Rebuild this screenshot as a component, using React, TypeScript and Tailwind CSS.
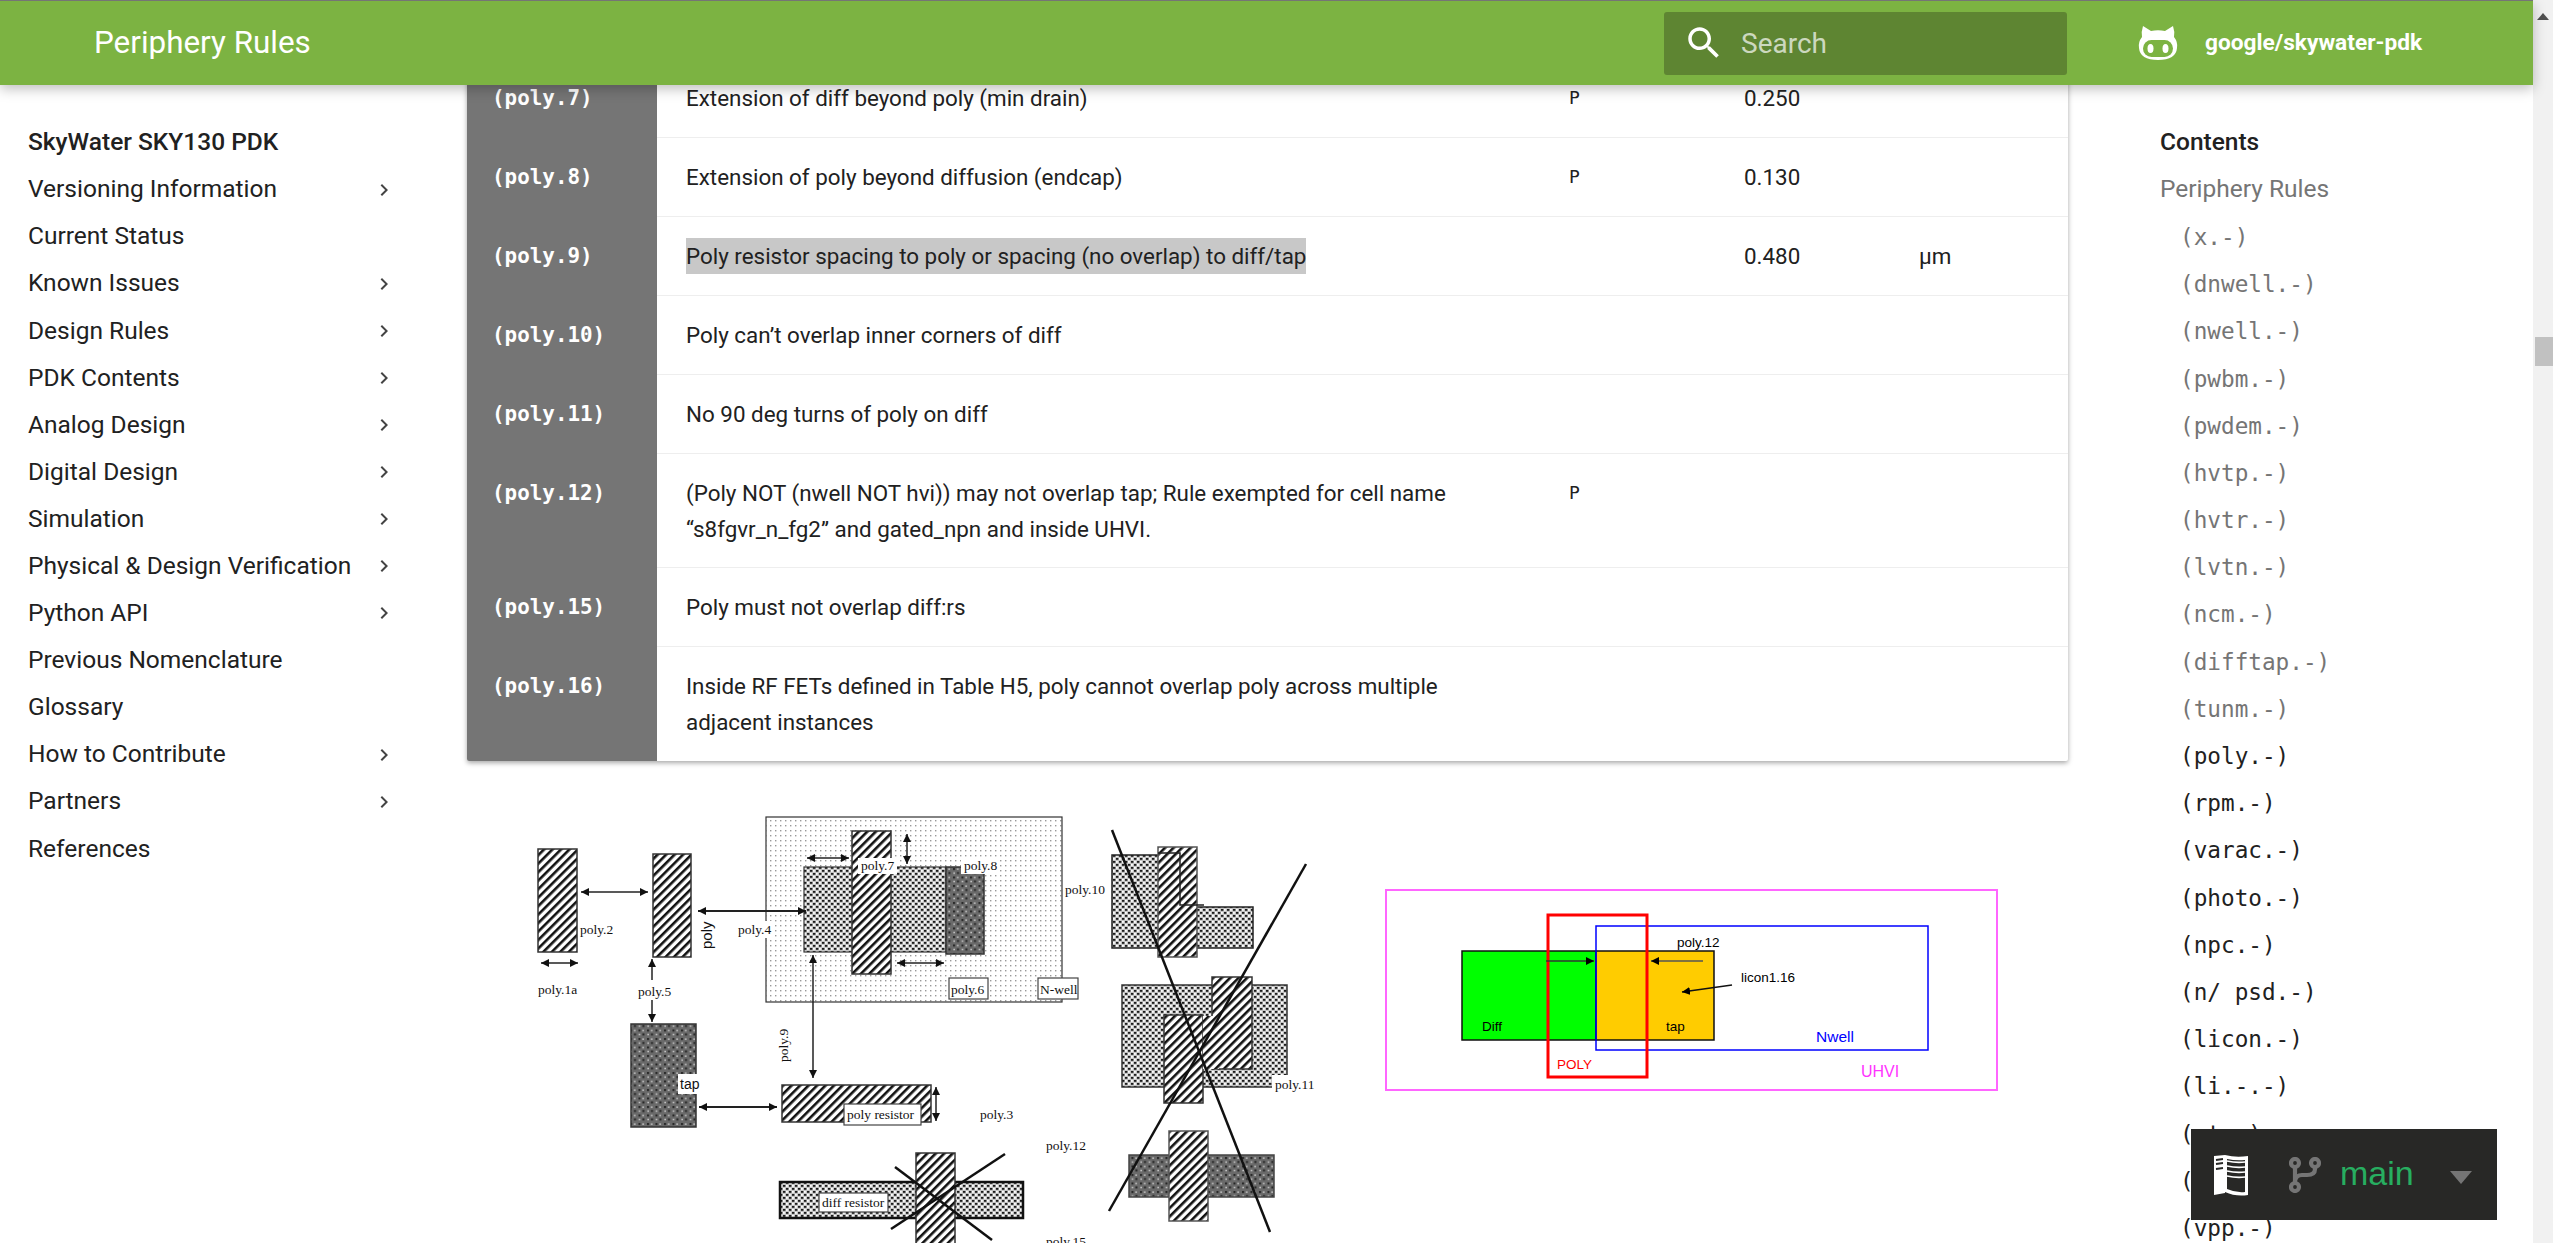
const NAV: [string, boolean][] = [
  ["Versioning Information", true],
  ["Current Status", false],
  ["Known Issues", true],
  ["Design Rules", true],
  ["PDK Contents", true],
  ["Analog Design", true],
  ["Digital Design", true],
  ["Simulation", true],
  ["Physical & Design Verification", true],
  ["Python API", true],
  ["Previous Nomenclature", false],
  ["Glossary", false],
  ["How to Contribute", true],
  ["Partners", true],
  ["References", false],
];

const TOC_SEEN = ["(x.-)", "(dnwell.-)", "(nwell.-)", "(pwbm.-)", "(pwdem.-)", "(hvtp.-)", "(hvtr.-)", "(lvtn.-)", "(ncm.-)", "(difftap.-)", "(tunm.-)"];
const TOC_NEXT = ["(poly.-)", "(rpm.-)", "(varac.-)", "(photo.-)", "(npc.-)", "(n/ psd.-)", "(licon.-)", "(li.-.-)", "(ct.-)", "(capm.-)", "(vpp.-)"];

type Rule = { code: string; text: string; flag?: string; value?: string; unit?: string; mark?: boolean; tight?: boolean };

const RULES: Rule[] = [
  { code: "(poly.7)", text: "Extension of diff beyond poly (min drain)", flag: "P", value: "0.250" },
  { code: "(poly.8)", text: "Extension of poly beyond diffusion (endcap)", flag: "P", value: "0.130" },
  { code: "(poly.9)", text: "Poly resistor spacing to poly or spacing (no overlap) to diff/tap", value: "0.480", unit: "µm", mark: true },
  { code: "(poly.10)", text: "Poly can’t overlap inner corners of diff" },
  { code: "(poly.11)", text: "No 90 deg turns of poly on diff" },
  { code: "(poly.12)", text: "(Poly NOT (nwell NOT hvi)) may not overlap tap; Rule exempted for cell name “s8fgvr_n_fg2” and gated_npn and inside UHVI.", flag: "P", tight: true },
  { code: "(poly.15)", text: "Poly must not overlap diff:rs" },
  { code: "(poly.16)", text: "Inside RF FETs defined in Table H5, poly cannot overlap poly across multiple adjacent instances" },
];

const HATCH = "url(#hatch)";
const DOTS = "url(#dots)";
const DIFF = "url(#diff)";
const TAP = "url(#tap)";

function Arrow({ d, both = true, w = 1.5 }: { d: [number, number, number, number]; both?: boolean; w?: number }) {
  return (
    <line x1={d[0]} y1={d[1]} x2={d[2]} y2={d[3]} stroke="#222" strokeWidth={w}
      markerEnd="url(#head)" markerStart={both ? "url(#head)" : undefined} />
  );
}

function Box({ x, y, w, h, fill, stroke = "#333", sw = 1.5 }: { x: number; y: number; w: number; h: number; fill: string; stroke?: string; sw?: number }) {
  return <rect x={x} y={y} width={w} height={h} fill={fill} stroke={stroke} strokeWidth={sw} />;
}

function Tag({ x, y, w, h, tx, ty, label, border }: { x: number; y: number; w: number; h: number; tx: number; ty: number; label: string; border?: boolean }) {
  return (
    <g>
      <rect x={x} y={y} width={w} height={h} fill="#fff" stroke={border ? "#444" : "none"} strokeWidth={1.2} />
      <text x={tx} y={ty} fill="#111">{label}</text>
    </g>
  );
}

function RulesFigure() {
  return (
    <svg viewBox="520 800 830 443" width={830} height={443} className="shrink-0 font-['Liberation_Serif',serif] text-[13.5px]">
      <defs>
        <pattern id="hatch" width="6" height="6" patternUnits="userSpaceOnUse" patternTransform="rotate(45)">
          <rect width="6" height="6" fill="#fff" />
          <rect width="2.6" height="6" fill="#111" />
        </pattern>
        <pattern id="dots" width="5" height="5" patternUnits="userSpaceOnUse">
          <rect width="5" height="5" fill="#fff" />
          <rect width="1.4" height="1.4" fill="#999" />
        </pattern>
        <pattern id="diff" width="6" height="6" patternUnits="userSpaceOnUse">
          <rect width="6" height="6" fill="#c4c4c4" />
          <rect width="2.4" height="1.8" fill="#1a1a1a" />
          <rect x="3" y="3" width="2.4" height="1.8" fill="#1a1a1a" />
          <rect x="3" width="1.8" height="1.8" fill="#fff" />
          <rect y="3" width="1.8" height="1.8" fill="#fff" />
        </pattern>
        <pattern id="tap" width="8.5" height="8.5" patternUnits="userSpaceOnUse">
          <rect width="8.5" height="8.5" fill="#6a6a6a" />
          <rect x="1" y="1" width="2" height="2" fill="#222" />
          <rect x="5" y="5" width="2" height="2" fill="#222" />
          <rect x="5" y="1.4" width="1.4" height="1.4" fill="#ddd" />
          <rect x="1.4" y="5.4" width="1.4" height="1.4" fill="#ddd" />
        </pattern>
        <marker id="head" markerUnits="userSpaceOnUse" markerWidth="10" markerHeight="10" refX="8" refY="4" orient="auto-start-reverse">
          <path d="M0 0L8 4L0 8Z" fill="#111" />
        </marker>
      </defs>

      {/* spacing rules */}
      <Box x={538} y={849} w={39} h={103} fill={HATCH} />
      <Box x={653} y={854} w={38} h={103} fill={HATCH} />
      <Arrow d={[581, 892, 648, 892]} />
      <text x={580} y={934} fill="#111">poly.2</text>
      <Arrow d={[541, 963, 578, 963]} />
      <text x={538} y={994} fill="#111">poly.1a</text>
      <line x1={652} y1={959} x2={652} y2={980} stroke="#222" strokeWidth={1.5} markerStart="url(#head)" />
      <line x1={652} y1={1000} x2={652} y2={1022} stroke="#222" strokeWidth={1.5} markerEnd="url(#head)" />
      <text x={638} y={996} fill="#111">poly.5</text>
      <text transform="translate(712 949) rotate(-90)" fill="#111" className="font-['Liberation_Sans',sans-serif] text-[15px]">poly</text>

      <Box x={766} y={817} w={296} h={185} fill={DOTS} sw={1.2} />
      <Box x={804} y={867} w={142} h={85} fill={DIFF} sw={1.2} />
      <Box x={946} y={867} w={38} h={87} fill={TAP} />
      <Box x={852} y={831} w={39} h={143} fill={HATCH} />
      <Arrow d={[698, 911, 806, 911]} w={2} />
      <Tag x={736} y={921} w={37} h={17} tx={738} ty={934} label="poly.4" />
      <Tag x={858} y={858} w={39} h={16} tx={861} ty={870} label="poly.7" />
      <Tag x={961} y={858} w={36} h={16} tx={964} ty={870} label="poly.8" />
      <Arrow d={[807, 858, 849, 858]} />
      <Arrow d={[907, 834, 907, 864]} />
      <Arrow d={[897, 963, 944, 963]} />
      <Tag x={949} y={978} w={39} h={21} tx={951} ty={994} label="poly.6" border />
      <Tag x={1038} y={978} w={40} h={21} tx={1040} ty={994} label="N-well" border />
      <text x={1065} y={894} fill="#111">poly.10</text>

      <Arrow d={[813, 955, 813, 1078]} />
      <text transform="translate(788 1062) rotate(-90)" fill="#111">poly.9</text>

      {/* tap and resistor */}
      <Box x={631} y={1024} w={65} h={103} fill={TAP} />
      <rect x={678} y={1074} width={20} height={20} fill="#fff" />
      <text x={680} y={1089} fill="#111" className="font-['Liberation_Sans',sans-serif] text-[14px]">tap</text>
      <Arrow d={[699, 1107, 777, 1107]} w={2} />
      <Box x={782} y={1085} w={149} h={37} fill={HATCH} />
      <Tag x={844} y={1104} w={77} h={21} tx={847} ty={1119} label="poly resistor" border />
      <Arrow d={[936, 1087, 936, 1121]} />
      <text x={980} y={1119} fill="#111">poly.3</text>
      <text x={1046} y={1150} fill="#111">poly.12</text>

      <Box x={780} y={1182} w={243} h={36} fill={DIFF} stroke="#111" sw={2.5} />
      <Box x={916} y={1153} w={39} h={100} fill={HATCH} />
      <Tag x={819} y={1193} w={69} h={19} tx={822} ty={1207} label="diff resistor" border />
      <line x1={895} y1={1167} x2={992} y2={1240} stroke="#111" strokeWidth={2.5} />
      <line x1={1005} y1={1154} x2={891} y2={1229} stroke="#111" strokeWidth={2.5} />
      <text x={1046} y={1246} fill="#111">poly.15</text>

      {/* not allowed shapes */}
      <polygon points="1112,855 1180,855 1180,907 1253,907 1253,948 1112,948" fill={DIFF} stroke="#222" strokeWidth={1.5} />
      <polygon points="1158,847 1197,847 1197,904 1197,957 1158,957" fill={HATCH} stroke="#555" strokeWidth={1.5} />
      <polyline points="1158,853 1180,853 1180,905 1204,905" fill="none" stroke="#222" strokeWidth={1.5} />

      <Box x={1122} y={985} w={165} h={102} fill={DIFF} />
      <Box x={1212} y={977} w={40} h={92} fill={HATCH} />
      <Box x={1164} y={1015} w={39} h={88} fill={HATCH} />
      <rect x={1203} y={1016} width={16} height={53} fill={HATCH} />
      <Tag x={1272} y={1075} w={44} h={18} tx={1275} ty={1089} label="poly.11" />

      <Box x={1129} y={1155} w={145} h={42} fill={TAP} stroke="#444" />
      <Box x={1169} y={1131} w={39} h={90} fill={HATCH} stroke="#555" />

      <line x1={1112} y1={830} x2={1270} y2={1232} stroke="#111" strokeWidth={2.5} />
      <line x1={1306} y1={864} x2={1109} y2={1211} stroke="#111" strokeWidth={2.5} />
    </svg>
  );
}

function LiconFigure() {
  return (
    <svg viewBox="1380 880 624 220" width={624} height={220} className="mt-[80px] shrink-0 font-['Liberation_Sans',sans-serif] text-[13.5px]">
      <defs>
        <marker id="tip" markerUnits="userSpaceOnUse" markerWidth="10" markerHeight="10" refX="8" refY="4" orient="auto">
          <path d="M0 0L8 4L0 8Z" fill="#000" />
        </marker>
      </defs>
      <rect x={1386} y={890} width={611} height={200} fill="#fff" stroke="#ff66ff" strokeWidth={2} />
      <rect x={1462} y={951} width={134} height={89} fill="#00ff00" stroke="#111" strokeWidth={1.5} />
      <rect x={1596} y={951} width={118} height={89} fill="#ffcc00" stroke="#111" strokeWidth={1.5} />
      <rect x={1596} y={926} width={332} height={124} fill="none" stroke="#0000ff" strokeWidth={1.5} />
      <rect x={1548} y={915} width={99} height={162} fill="none" stroke="#ff0000" strokeWidth={3} />
      <line x1={1546} y1={961} x2={1594} y2={961} stroke="#333" strokeWidth={1.5} markerEnd="url(#tip)" />
      <line x1={1703} y1={961} x2={1651} y2={961} stroke="#555" strokeWidth={1.5} markerEnd="url(#tip)" />
      <line x1={1732} y1={985} x2={1682} y2={992} stroke="#111" strokeWidth={1.5} markerEnd="url(#tip)" />
      <text x={1677} y={947}>poly.12</text>
      <text x={1741} y={982}>licon1.16</text>
      <text x={1482} y={1031}>Diff</text>
      <text x={1666} y={1031}>tap</text>
      <text x={1816} y={1042} fill="#0000ff" className="text-[15.5px]">Nwell</text>
      <text x={1557} y={1069} fill="#ff0000">POLY</text>
      <text x={1861} y={1077} fill="#ff33ff" className="text-[16px]">UHVI</text>
    </svg>
  );
}

function BookIcon() {
  return (
    <svg viewBox="0 0 34 42" width={34} height={42} className="shrink-0">
      <path d="M0 2L11 1V39L0 41Z" fill="#fff" />
      <path d="M11 1Q22 4 34 2V41Q22 43 11 38Z" fill="#fff" />
      <path d="M13 5Q22 7 31 6V38Q22 39 13 35Z" fill="#282826" />
      <path d="M13 7Q22 9 31 8M13 12Q22 14 31 13M13 17Q22 19 31 18M13 22Q22 24 31 23" fill="none" stroke="#fff" strokeWidth={1.6} />
      <path d="M2 6L9 5M2 10L9 9M2 15L9 14" fill="none" stroke="#282826" strokeWidth={1.8} />
    </svg>
  );
}

function BranchIcon() {
  return (
    <svg viewBox="0 0 32 36" width={32} height={36} className="shrink-0">
      <g fill="none" stroke="#757575" strokeWidth={4.2}>
        <circle cx="6" cy="6" r="4" />
        <circle cx="26" cy="6" r="4" />
        <circle cx="6" cy="30" r="4" />
        <path d="M6 10V26M26 10V12Q26 18 18 18H13Q7 18 6 24" />
      </g>
    </svg>
  );
}

function GithubIcon() {
  return (
    <svg viewBox="0 0 48 42" width={48} height={42} className="shrink-0">
      <path d="M9 4L17 9Q24 7.5 31 9L39 4Q41 10 40 15Q44 20 43 26Q42 38 24 38Q6 38 5 26Q4 20 8 15Q7 10 9 4Z" fill="#fff" />
      <rect x="9" y="18" width="30" height="17" rx="8.5" fill="#7cb342" />
      <ellipse cx="16.5" cy="26.5" rx="3" ry="4.5" fill="#fff" />
      <ellipse cx="31.5" cy="26.5" rx="3" ry="4.5" fill="#fff" />
    </svg>
  );
}

export default function App() {
  return (
    <div className="relative flex h-screen overflow-hidden bg-white font-['Roboto',sans-serif] text-[#212121]">
      <div className="flex min-w-0 flex-1 flex-col">
        <header className="relative z-10 flex h-[85px] shrink-0 items-center border-t border-[#757575] bg-[#7cb342] shadow-[0_4px_12px_rgba(0,0,0,0.25)]">
          <h1 className="ml-[94px] text-[31.4px] font-normal text-white">Periphery Rules</h1>
          <div className="ml-auto flex h-[63px] w-[403px] items-center rounded-[3px] bg-[#5e8532] pl-[19px]">
            <svg viewBox="0 0 24 24" width={42} height={42} className="shrink-0 fill-white">
              <path d="M15.5 14h-.79l-.28-.27C15.41 12.59 16 11.11 16 9.5 16 5.91 13.09 3 9.5 3S3 5.91 3 9.5 5.91 16 9.5 16c1.61 0 3.09-.59 4.23-1.57l.27.28v.79l5 4.99L20.49 19l-4.99-5zm-6 0C7.01 14 5 11.99 5 9.5S7.01 5 9.5 5 14 7.01 14 9.5 11.99 14 9.5 14z" />
            </svg>
            <span className="ml-[16px] mt-[2px] text-[28px] text-white/70">Search</span>
          </div>
          <div className="ml-[67px] flex w-[399px] items-center">
            <GithubIcon />
            <span className="ml-[23px] text-[22.7px] font-bold text-white">google/skywater-pdk</span>
          </div>
        </header>

        <div className="flex min-h-0 flex-1 overflow-hidden">
          <nav className="w-[467px] shrink-0 pl-[28px] pt-[34px] text-[24.5px]">
            <div className="flex h-[47.1px] items-center font-medium">SkyWater SKY130 PDK</div>
            {NAV.map(([label, more]) => (
              <div key={label} className="flex h-[47.1px] w-[368px] items-center justify-between">
                <span>{label}</span>
                {more && (
                  <svg viewBox="0 0 24 24" width={24} height={24} className="shrink-0 fill-[#444]">
                    <path d="M8.59 16.59L13.17 12 8.59 7.41 10 6l6 6-6 6z" />
                  </svg>
                )}
              </div>
            ))}
          </nav>

          <main className="w-[1601px] shrink-0">
            <div className="-mt-[26px] overflow-hidden rounded-[2px] bg-white shadow-[0_2px_5px_rgba(0,0,0,0.35)]">
              <table className="w-full table-fixed border-separate border-spacing-0 text-[22.4px] leading-[36px]">
                <colgroup>
                  <col className="w-[190px]" />
                  <col className="w-[882px]" />
                  <col className="w-[175px]" />
                  <col className="w-[175px]" />
                  <col />
                </colgroup>
                <tbody>
                  {RULES.map((r, i) => {
                    const line = i < RULES.length - 1 ? "border-b border-[#eeeeee]" : "";
                    const pad = r.tight ? "pt-[21px] pb-[20px]" : "py-[21px]";
                    return (
                      <tr key={r.code}>
                        <td className={`bg-[#757575] pl-[25px] align-top font-['DejaVu_Sans_Mono',monospace] text-[20.9px] font-bold text-white ${pad}`}>
                          {r.code}
                        </td>
                        <td className={`px-[29px] align-top ${pad} ${line}`}>
                          {r.mark ? <span className="inline-block bg-[#c8c8c8]">{r.text}</span> : r.text}
                        </td>
                        <td className={`px-[30px] align-top font-['DejaVu_Sans_Mono',monospace] text-[18px] ${pad} ${line}`}>{r.flag}</td>
                        <td className={`px-[30px] align-top ${pad} ${line}`}>{r.value}</td>
                        <td className={`px-[30px] align-top ${pad} ${line}`}>{r.unit}</td>
                      </tr>
                    );
                  })}
                </tbody>
              </table>
            </div>
            <div className="mt-[39px] flex items-start gap-[30px] pl-[53px]">
              <RulesFigure />
              <LiconFigure />
            </div>
          </main>

          <aside className="min-w-0 flex-1 pl-[92px] pt-[34px] text-[24.5px]">
            <div className="flex h-[47.2px] items-center font-medium">Contents</div>
            <div className="flex h-[47.2px] items-center text-[#757575]">Periphery Rules</div>
            <div className="pl-[20px] font-['DejaVu_Sans_Mono',monospace] text-[22.7px]">
              {TOC_SEEN.map((t) => (
                <div key={t} className="flex h-[47.2px] items-center text-[#757575]">{t}</div>
              ))}
              {TOC_NEXT.map((t) => (
                <div key={t} className="flex h-[47.2px] items-center text-[#212121]">{t}</div>
              ))}
            </div>
          </aside>
        </div>
      </div>

      <div className="relative w-[20px] shrink-0 bg-[#f1f1f1]">
        <div className="mx-auto mt-[13px] h-0 w-0 border-x-[6px] border-b-[7px] border-x-transparent border-b-[#505050]" />
        <div className="absolute left-[2px] right-0 top-[337px] h-[29px] bg-[#c1c1c1]" />
      </div>

      <div className="absolute left-[2191px] top-[1129px] flex h-[91px] w-[306px] items-center bg-[#282826] pl-[23px] font-['Liberation_Sans',sans-serif]">
        <BookIcon />
        <div className="ml-[41px]"><BranchIcon /></div>
        <span className="ml-[19px] -mt-[3px] text-[34px] leading-none text-[#27ae60]">main</span>
        <div className="ml-[36px] mt-[6px] h-0 w-0 border-x-[11px] border-t-[13px] border-x-transparent border-t-[#757575]" />
      </div>
    </div>
  );
}
